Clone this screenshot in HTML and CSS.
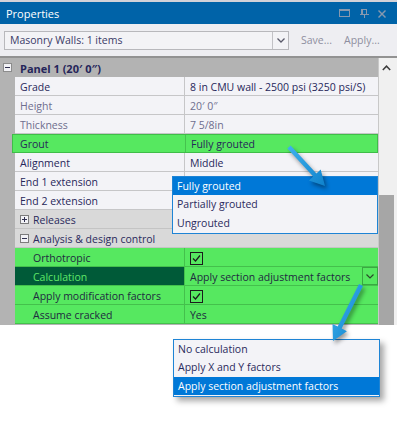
FILE: index.html
```html
<!DOCTYPE html>
<html>
<head>
<meta charset="utf-8">
<link rel="stylesheet" href="styles.css">
</head>
<body>
<div class="panel">
  <header class="titlebar">
    <span class="title-text">Properties</span>
    <svg class="title-icons" width="58" height="22" viewBox="0 0 58 22">
      <g fill="none" stroke="#8698ae" stroke-width="1">
        <rect x="0.5" y="7.5" width="10" height="7"/>
        <line x1="0" y1="8.5" x2="11" y2="8.5"/>
        <rect x="22.5" y="7.5" width="5" height="5"/>
        <line x1="21" y1="12.5" x2="30" y2="12.5"/>
        <line x1="25.5" y1="12.5" x2="25.5" y2="16"/>
        <line x1="39.5" y1="8.5" x2="46.5" y2="15.5" stroke-width="1.4"/>
        <line x1="46.5" y1="8.5" x2="39.5" y2="15.5" stroke-width="1.4"/>
      </g>
      <line x1="23.5" y1="7.5" x2="23.5" y2="12.5" stroke="#8698ae"/>
    </svg>
  </header>
  <div class="toolbar">
    <div class="combo">
      <span class="combo-text">Masonry Walls: 1 items</span>
      <span class="combo-btn">
        <svg width="8" height="5" viewBox="0 0 8 5"><polyline points="0.5,0.5 4,4 7.5,0.5" fill="none" stroke="#5a5a6a" stroke-width="1.3"/></svg>
      </span>
    </div>
    <span class="tb-btn">Save...</span>
    <span class="tb-btn">Apply...</span>
  </div>
  <div class="grid-area">
    <div class="rows">
      <div class="cat">
        <svg class="tog" width="9" height="9" viewBox="0 0 9 9"><rect x="0.5" y="0.5" width="8" height="8" fill="#f2f2f6" stroke="#8c8c8c"/><line x1="2" y1="4.5" x2="7" y2="4.5" stroke="#303050"/></svg>
        <span class="cat-text">Panel 1 (20′ 0″)</span>
      </div>
      <div class="row"><div class="lbl">Grade</div><div class="val">8 in CMU wall - 2500 psi (3250 psi/S)</div></div>
      <div class="row ro"><div class="lbl">Height</div><div class="val">20′ 0″</div></div>
      <div class="row ro"><div class="lbl">Thickness</div><div class="val">7 5/8in</div></div>
      <div class="row sel"><div class="lbl">Grout</div><div class="val">Fully grouted</div></div>
      <div class="row"><div class="lbl">Alignment</div><div class="val">Middle</div></div>
      <div class="row"><div class="lbl">End 1 extension</div><div class="val"></div></div>
      <div class="row"><div class="lbl">End 2 extension</div><div class="val"></div></div>
      <div class="sec">
        <svg class="tog" width="9" height="9" viewBox="0 0 9 9"><rect x="0.5" y="0.5" width="8" height="8" fill="#f2f2f6" stroke="#7c7c7c"/><line x1="2" y1="4.5" x2="7" y2="4.5" stroke="#303050"/><line x1="4.5" y1="2" x2="4.5" y2="7" stroke="#303050"/></svg>
        <span class="sec-text">Releases</span>
      </div>
      <div class="sec">
        <svg class="tog" width="9" height="9" viewBox="0 0 9 9"><rect x="0.5" y="0.5" width="8" height="8" fill="#f2f2f6" stroke="#7c7c7c"/><line x1="2" y1="4.5" x2="7" y2="4.5" stroke="#303050"/></svg>
        <span class="sec-text">Analysis &amp; design control</span>
      </div>
      <div class="row grn"><div class="lbl">Orthotropic</div><div class="val"><span class="chk"><svg width="11" height="11" viewBox="0 0 11 11"><polyline points="2,5.5 4.5,8 9,2.5" fill="none" stroke="#1a1a1a" stroke-width="1.2"/></svg></span></div></div>
      <div class="row grn cur"><div class="lbl">Calculation</div><div class="val"><span class="txt">Apply section adjustment factors</span><span class="dd-btn"><svg width="8" height="5" viewBox="0 0 8 5"><polyline points="0.5,0.5 4,4 7.5,0.5" fill="none" stroke="#2a4a2a" stroke-width="1.2"/></svg></span></div></div>
      <div class="row grn"><div class="lbl">Apply modification factors</div><div class="val"><span class="chk"><svg width="11" height="11" viewBox="0 0 11 11"><polyline points="2,5.5 4.5,8 9,2.5" fill="none" stroke="#1a1a1a" stroke-width="1.2"/></svg></span></div></div>
      <div class="row grn"><div class="lbl">Assume cracked</div><div class="val">Yes</div></div>
    </div>
    <div class="scrollbar">
      <div class="sb-up"><svg width="9" height="6" viewBox="0 0 9 6"><polyline points="0.8,5 4.5,1.2 8.2,5" fill="none" stroke="#3c3c3c" stroke-width="1.5"/></svg></div>
      <div class="sb-track"></div>
      <div class="sb-thumb"></div>
    </div>
  </div>
</div>

<ul class="popup popup-grout">
  <li class="on">Fully grouted</li>
  <li>Partially grouted</li>
  <li>Ungrouted</li>
</ul>

<ul class="popup popup-calc">
  <li>No calculation</li>
  <li>Apply X and Y factors</li>
  <li class="on">Apply section adjustment factors</li>
</ul>

<svg class="arrows" width="397" height="444" viewBox="0 0 397 444">
  <defs>
    <linearGradient id="ag" x1="0" y1="0" x2="1" y2="1">
      <stop offset="0" stop-color="#3fb2ee"/>
      <stop offset="1" stop-color="#0f82cc"/>
    </linearGradient>
  </defs>
  <polygon points="287.4,148.5 313.2,176.5 308.9,180.4 325,186 320.7,169.6 316.4,173.5 290.6,145.5" fill="url(#ag)"/>
  <polygon points="363,286 341.7,328.6 346.9,331.2 333,341 332.5,324 337.7,326.6 359,284" fill="url(#ag)"/>
</svg>
</body>
</html>
```

FILE: styles.css
```css
* { box-sizing: border-box; margin: 0; padding: 0; }
html, body { width: 397px; height: 444px; }
body {
  position: relative;
  overflow: hidden;
  background: #ffffff;
  font-family: "Open Sans", "Noto Sans", sans-serif;
  font-size: 10.5px;
  color: #27275a;
}

.panel { width: 397px; display: flex; flex-direction: column; }

.titlebar {
  height: 24px;
  border-top: 2px solid #d2d2d8;
  background: #0063a8;
  color: #ffffff;
  display: flex;
  align-items: center;
  justify-content: space-between;
  padding-left: 6px;
}
.title-text { font-size: 11px; }
.title-icons { display: block; }

.toolbar {
  height: 34px;
  background: #eeeef2;
  border-bottom: 2px solid #929292;
  display: flex;
  align-items: center;
  padding-left: 4px;
}
.combo {
  width: 285px;
  height: 19px;
  border: 1px solid #b8b8bc;
  background: #f3f3f6;
  display: flex;
  justify-content: space-between;
  align-items: stretch;
}
.combo-text { padding-left: 5px; line-height: 17px; color: #3a3a66; }
.combo-btn {
  width: 16px;
  border-left: 1px solid #c2c2c6;
  display: flex;
  align-items: center;
  justify-content: center;
}
.tb-btn { color: #8e8ea0; margin-left: 12px; }

.grid-area { height: 267px; display: flex; }
.rows { flex: 1; background: #b3b3b3; display: flex; flex-direction: column; }

.cat {
  height: 19px;
  display: flex;
  align-items: center;
  padding-left: 3px;
  gap: 8px;
}
.tog { display: block; flex: none; }
.cat-text { font-weight: 700; font-size: 11px; color: #25255a; padding-top: 2px; }

.row {
  height: 19px;
  margin-left: 15px;
  display: grid;
  grid-template-columns: 170px 1fr;
  grid-template-rows: 18px;
  background: #f3f3f7;
  border-bottom: 1px solid #c6c6c8;
}
.lbl {
  padding: 2px 0 0 5px;
  line-height: 16px;
  border-right: 1px solid #c6c6c8;
  white-space: nowrap;
}
.val {
  padding: 2px 0 0 5px;
  line-height: 16px;
  white-space: nowrap;
  display: flex;
  align-items: center;
  justify-content: space-between;
}
.ro { color: #6e6e8e; }

.sel {
  margin-left: 12px;
  grid-template-columns: 173px 1fr;
  grid-template-rows: 17px;
  background: #56e860;
  border: 1px solid #3fbd48;
}
.sel .lbl { padding-left: 7px; line-height: 15px; border-right-color: #45c24e; }
.sel .val { line-height: 15px; }

.sec {
  height: 19px;
  margin-left: 15px;
  background: #d9d9d9;
  border-bottom: 1px solid #c4c4c4;
  display: flex;
  align-items: center;
  padding-left: 5px;
  gap: 4px;
  color: #2a2a5c;
}
.sec-text { padding-top: 2px; }

.grn { background: #56e860; border-bottom-color: #44c04c; color: #1f2a40; }
.grn .lbl { padding-left: 18px; border-right-color: #44c04c; }
.cur .lbl { background: #005a38; color: #5fe868; }
.cur .val { padding-top: 0; align-items: stretch; }
.cur .txt { padding-top: 2px; line-height: 16px; }

.chk {
  width: 13px;
  height: 13px;
  border: 1px solid #1c1c1c;
  display: flex;
  align-items: center;
  justify-content: center;
}
.dd-btn {
  width: 16px;
  border: 1px solid #3aa842;
  display: flex;
  align-items: center;
  justify-content: center;
}

.scrollbar {
  width: 19px;
  background: #f0f0f0;
  border-left: 1px solid #c8c8c8;
  display: flex;
  flex-direction: column;
}
.sb-up { height: 20px; display: flex; align-items: center; justify-content: center; padding-right: 3px; }
.sb-track { flex: 1; }
.sb-thumb { height: 130px; background: #a6a6a6; margin-right: 3px; }

.popup {
  position: absolute;
  list-style: none;
  background: #f3f3f7;
  border: 1px solid #1e84d5;
  padding-bottom: 1px;
  color: #2a2a5c;
}
.popup li { height: 18px; line-height: 18px; padding-left: 4px; white-space: nowrap; }
.popup li:nth-child(2) { height: 19px; line-height: 19px; }
.popup li.on { background: #0078d7; color: #ffffff; }
.popup-grout { left: 172px; top: 176px; width: 206px; }
.popup-calc {
  left: 173px;
  top: 339px;
  width: 207px;
  box-shadow: 4px 4px 6px rgba(0, 0, 0, 0.35);
}

.arrows {
  position: absolute;
  left: 0;
  top: 0;
  pointer-events: none;
  filter: drop-shadow(2px 3px 2px rgba(0, 0, 0, 0.4));
}
```
